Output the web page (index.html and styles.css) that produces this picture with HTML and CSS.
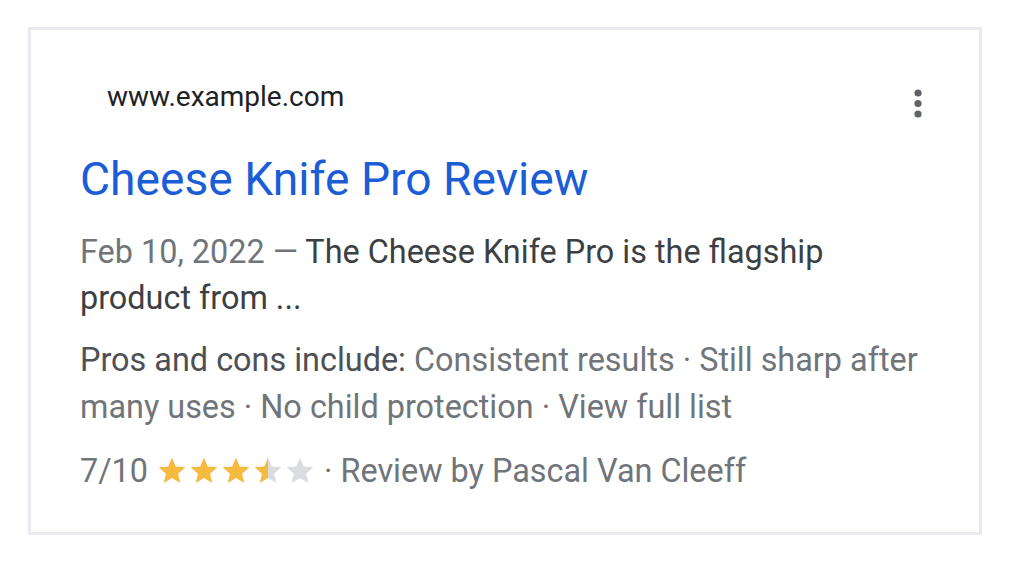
FILE: index.html
```html
<!DOCTYPE html>
<html lang="en">
<head>
<meta charset="utf-8">
<title>Cheese Knife Pro Review</title>
<link rel="stylesheet" href="styles.css">
</head>
<body>
<div class="card">
  <div class="header">
    <div class="site">
      <span class="favicon"></span>
      <span class="url">www.example.com</span>
    </div>
    <svg class="kebab" width="24" height="36" viewBox="0 0 24 36" aria-hidden="true">
      <circle cx="12" cy="7" r="3.6"/>
      <circle cx="12" cy="17.5" r="3.6"/>
      <circle cx="12" cy="28" r="3.6"/>
    </svg>
  </div>
  <h1 class="title">Cheese Knife Pro Review</h1>
  <p class="desc"><span class="date">Feb 10, 2022 — </span>The Cheese Knife Pro is the flagship product from ...</p>
  <p class="pros"><span class="label">Pros and cons include:</span> Consistent results · Still sharp after many uses · No child protection · View full list</p>
  <div class="rating">
    <span class="score">7/10</span>
    <span class="stars">
      <svg class="star" viewBox="0 0 24 24"><path class="on" d="M12 17.27L18.18 21l-1.64-7.03L22 9.24l-7.19-.61L12 2 9.19 8.63 2 9.24l5.46 4.73L5.82 21z"/></svg>
      <svg class="star" viewBox="0 0 24 24"><path class="on" d="M12 17.27L18.18 21l-1.64-7.03L22 9.24l-7.19-.61L12 2 9.19 8.63 2 9.24l5.46 4.73L5.82 21z"/></svg>
      <svg class="star" viewBox="0 0 24 24"><path class="on" d="M12 17.27L18.18 21l-1.64-7.03L22 9.24l-7.19-.61L12 2 9.19 8.63 2 9.24l5.46 4.73L5.82 21z"/></svg>
      <svg class="star" viewBox="0 0 24 24"><defs><linearGradient id="half"><stop offset="50%" stop-color="#f5bb40"/><stop offset="50%" stop-color="#dadce0"/></linearGradient></defs><path fill="url(#half)" d="M12 17.27L18.18 21l-1.64-7.03L22 9.24l-7.19-.61L12 2 9.19 8.63 2 9.24l5.46 4.73L5.82 21z"/></svg>
      <svg class="star" viewBox="0 0 24 24"><path class="off" d="M12 17.27L18.18 21l-1.64-7.03L22 9.24l-7.19-.61L12 2 9.19 8.63 2 9.24l5.46 4.73L5.82 21z"/></svg>
    </span>
    <span class="byline">· Review by Pascal Van Cleeff</span>
  </div>
</div>
</body>
</html>
```
FILE: styles.css
```css
html, body {
  margin: 0;
  padding: 0;
  background: #ffffff;
}

body {
  font-family: Roboto, "Liberation Sans", Arial, sans-serif;
  padding: 27px 0 0 28px;
}

.card {
  width: 850px;
  border: 3px solid #e8eaed;
  padding: 52px 49px 38px 49px;
}

.header {
  display: flex;
  justify-content: space-between;
  align-items: flex-start;
  height: 30px;
}

.site {
  display: flex;
  align-items: center;
}

.favicon {
  display: inline-block;
  width: 27px;
  height: 27px;
}

.url {
  font-size: 28px;
  line-height: 30px;
  color: #202124;
}

.kebab {
  fill: #5f6368;
  margin-top: 4px;
}

.title {
  margin: 39px 0 0 0;
  font-size: 46.2px;
  font-weight: 400;
  line-height: 56px;
  color: #1a5dd6;
}

.desc {
  margin: 22px 0 0 0;
  font-size: 32.4px;
  line-height: 46px;
  color: #3c4043;
}

.date {
  color: #70757a;
}

.pros {
  margin: 16px 0 0 0;
  font-size: 32.4px;
  line-height: 47px;
  color: #70757a;
}

.label {
  color: #4d5156;
}

.rating {
  margin-top: 17px;
  display: flex;
  align-items: center;
  font-size: 32.4px;
  line-height: 46px;
  color: #70757a;
}

.score {
  margin-right: 8px;
}

.stars {
  display: flex;
  margin-right: 8px;
}

.star {
  width: 32px;
  height: 32px;
}

.star .on {
  fill: #f5bb40;
}

.star .off {
  fill: #dadce0;
}
```
